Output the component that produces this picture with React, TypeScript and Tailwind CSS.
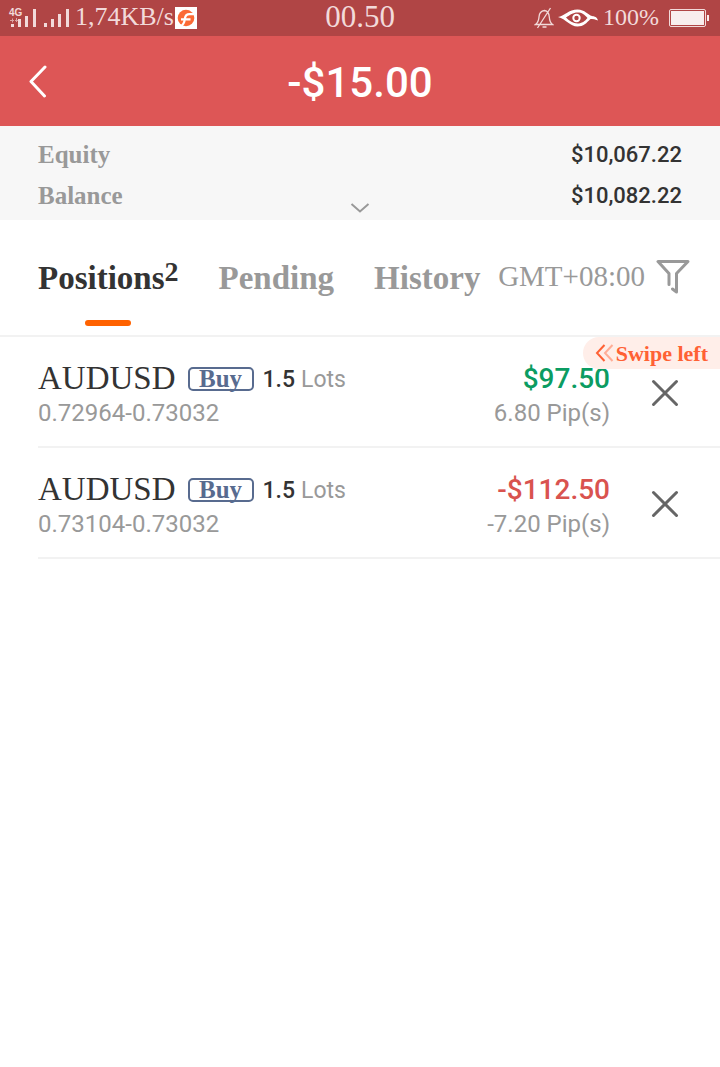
import { useState } from "react";

const serif = "font-['Liberation_Serif',serif]";
const sans = "font-[Roboto,sans-serif]";

type Position = {
  id: number;
  symbol: string;
  side: string;
  lots: string;
  prices: string;
  profit: string;
  pips: string;
};

const positions: Position[] = [
  { id: 1, symbol: "AUDUSD", side: "Buy", lots: "1.5", prices: "0.72964-0.73032", profit: "$97.50", pips: "6.80 Pip(s)" },
  { id: 2, symbol: "AUDUSD", side: "Buy", lots: "1.5", prices: "0.73104-0.73032", profit: "-$112.50", pips: "-7.20 Pip(s)" },
];

const summary = [
  { label: "Equity", value: "$10,067.22" },
  { label: "Balance", value: "$10,082.22" },
];

const tabs = [
  { name: "Positions", count: 2 },
  { name: "Pending" },
  { name: "History" },
];

function StatusBar() {
  return (
    <div className={`grid h-9 grid-cols-[1fr_auto_1fr] bg-[#b04545] text-[#f2dada] ${serif}`}>
      <div className="flex items-start pl-[9px]">
        <div className="relative">
          <svg width="29" height="36" fill="currentColor" aria-hidden="true">
            <path d="M2 24h3v3H2zM9 19h3v8H9zM16 16h3v11h-3zM24 9h3v18h-3z" />
            <path d="M1 20.5h4M3.5 18.5v4M7.5 18v4M6 20.5h3" stroke="#dba5a5" strokeWidth="1" fill="none" />
          </svg>
          <span className="absolute top-2 left-0 font-['Liberation_Sans',sans-serif] text-[10px] leading-[10px] font-bold">4G</span>
        </div>
        <svg className="ml-1.5" width="29" height="36" fill="currentColor" aria-hidden="true">
          <path d="M0 23h3v4H0zM7 19h3v8H7zM14 14h3v13h-3zM22 9h3v18h-3z" />
        </svg>
        <span className="ml-0.5 text-[26px] leading-[34px] whitespace-nowrap">1,74KB/s</span>
        <svg className="mt-[7px] ml-px shrink-0" width="22" height="22" aria-hidden="true">
          <path fill="#fff" d="M0 0h22v22H0z" />
          <circle cx="11" cy="11" r="8.3" fill="#fb6a35" />
          <path
            fill="none"
            stroke="#fff"
            strokeWidth="2.2"
            d="M20.5 7.2h-6c-3 0-4.200 1.300-4.600 4.300-.3 3.500-1.400 6.500-4.900 8.500M6 12.300h9.500"
          />
        </svg>
      </div>
      <span className="text-[31px] leading-[34px]">00.50</span>
      <div className="flex items-start justify-end pr-2.5">
        <svg width="20" height="36" fill="none" stroke="currentColor" strokeWidth="1.3" aria-hidden="true">
          <path d="M1.5 24.5h17c-2.500-2-3-4-3.200-7.500C15 13 13.500 11 10.500 10.500 7 11 5.200 13 5 17c-.2 3.500-1 5.500-3.500 7.500zM8.500 27h4M16.500 8 3.500 28" />
        </svg>
        <svg className="ml-1" width="41" height="36" fill="none" stroke="#fff" aria-hidden="true">
          <path
            fill="#fff"
            stroke="none"
            fillRule="evenodd"
            d="M0 17c6-1 11-7.500 19.500-7.500C27 9.500 30 15 34 16c2.500.3 5 1 6 4.500l-1.500-.5c-2-1-4-1.200-6-1-4 4-7 7.500-13 7.500C12 26.500 8 19 0 17zm8 .5c3.500 3.500 7 6 11.500 6s7.500-2.500 10-5.500c-3-3.500-5.500-5.500-10-5.500-4.500 0-7.500 2.500-11.500 5z"
          />
          <circle cx="18.500" cy="18" r="3.200" strokeWidth="2" />
        </svg>
        <span className="ml-1 text-2xl leading-[34px]">100%</span>
        <svg className="ml-2.5 shrink-0" width="41" height="36" aria-hidden="true">
          <rect x=".5" y="9.5" width="36" height="17" rx="1.5" fill="none" stroke="currentColor" />
          <path fill="#f8eded" d="M2 11h33v14H2zM38 15h2v6h-2z" />
        </svg>
      </div>
    </div>
  );
}

function PositionRow({ position, swipeHint }: { position: Position; swipeHint: boolean }) {
  const loss = position.profit.startsWith("-");
  return (
    <li className="relative ml-[38px] flex items-center border-b-2 border-[#f2f2f2]">
      <div className="flex-1 pt-[23px] pb-4">
        <div className="flex h-9 items-end">
          <span className={`text-[33px] leading-9 text-[#333] ${serif}`}>{position.symbol}</span>
          <span className={`mb-[5px] ml-3 flex h-6 w-[66px] items-center justify-center rounded-[5px] border-2 border-[#586b8f] text-[25px] leading-7 font-bold text-[#586b8f] ${serif}`}>
            {position.side}
          </span>
          <span className="ml-[9px] text-[23px] leading-8 font-medium text-[#333]">{position.lots}</span>
          <span className="ml-1.5 text-[23px] leading-8 text-[#999]">Lots</span>
        </div>
        <p className="text-2xl leading-[34px] text-[#999]">{position.prices}</p>
      </div>
      <div className="pt-[7px] text-right">
        <p className={`text-[28px] leading-9 font-medium ${loss ? "text-[#d9534f]" : "text-[#0b9c62]"}`}>{position.profit}</p>
        <p className="text-2xl leading-8 text-[#999]">{position.pips}</p>
      </div>
      <button type="button" aria-label="Close position" className="flex w-[110px] items-center justify-center self-stretch pt-0.5">
        <svg width="28" height="28" fill="none" stroke="#666" strokeWidth="3" strokeLinecap="round">
          <path d="M2.5 2.5l23 23M25.5 2.5l-23 23" />
        </svg>
      </button>
      {swipeHint && (
        <div className={`absolute top-0 right-0 flex h-8 items-center rounded-l-full bg-[#ffeee9] px-3 text-[22px] font-bold text-[#ff6134] ${serif}`}>
          <svg width="19" height="18" fill="none" strokeWidth="2" className="mr-0.5" aria-hidden="true">
            <path stroke="#ff6134" d="M9.500 1 2 9l7.500 8" />
            <path stroke="#ffad96" d="M17.500 1 10 9l7.500 8" />
          </svg>
          Swipe left
        </div>
      )}
    </li>
  );
}

export default function App() {
  const [active, setActive] = useState("Positions");

  return (
    <div className={`min-h-screen bg-white ${sans}`}>
      <StatusBar />

      <header className="grid h-[90px] grid-cols-[72px_1fr_72px] items-center bg-[#dd5656] text-white">
        <button type="button" aria-label="Back" className="flex h-full items-center pl-7">
          <svg width="20" height="34" fill="none" stroke="currentColor" strokeWidth="3" strokeLinecap="round" strokeLinejoin="round">
            <path d="M17 3 3 17.5 16.500 32" />
          </svg>
        </button>
        <h1 className="pt-1 text-center text-[42px] leading-[50px] font-medium">-$15.00</h1>
      </header>

      <section className="relative bg-[#f7f7f7] px-[38px] pt-2 pb-1">
        <dl>
          {summary.map((item) => (
            <div key={item.label} className="flex justify-between leading-[41px]">
              <dt className={`text-[25px] font-bold text-[#999] ${serif}`}>{item.label}</dt>
              <dd className="text-[22px] font-medium text-[#333]">{item.value}</dd>
            </div>
          ))}
        </dl>
        <button type="button" aria-label="Show more" className="absolute bottom-1.5 left-1/2 -translate-x-1/2">
          <svg width="20" height="12" fill="none" stroke="#999" strokeWidth="2" className="block">
            <path d="M1.5 2 10 9.500 18.500 2" />
          </svg>
        </button>
      </section>

      <div className={`flex items-start border-b-2 border-[#f2f2f2] pt-[38px] pr-[30px] pb-[9px] pl-[38px] text-[#999] ${serif}`}>
        <nav className="flex gap-10">
          {tabs.map((tab) => (
            <button
              key={tab.name}
              type="button"
              onClick={() => setActive(tab.name)}
              className={`flex flex-col items-center text-[33px] font-bold ${active === tab.name ? "text-[#333]" : ""}`}
            >
              <span className="flex leading-10">
                {tab.name}
                {tab.count && <span className="text-[28px] leading-7">{tab.count}</span>}
              </span>
              <span className={`mt-[22px] h-1.5 w-[46px] rounded-full ${active === tab.name ? "bg-[#ff6200]" : ""}`} />
            </button>
          ))}
        </nav>
        <span className="ml-auto text-[29px] leading-9">GMT+08:00</span>
        <button type="button" aria-label="Filter" className="ml-[11px]">
          <svg width="34" height="38" fill="none" stroke="#999" strokeWidth="3" strokeLinecap="round" strokeLinejoin="round">
            <path d="M13 26.500V15.500L2 3.500h30L20.500 15.500V34l-4-3" />
          </svg>
        </button>
      </div>

      <ul>
        {positions.map((position, i) => (
          <PositionRow key={position.id} position={position} swipeHint={i === 0} />
        ))}
      </ul>
    </div>
  );
}
